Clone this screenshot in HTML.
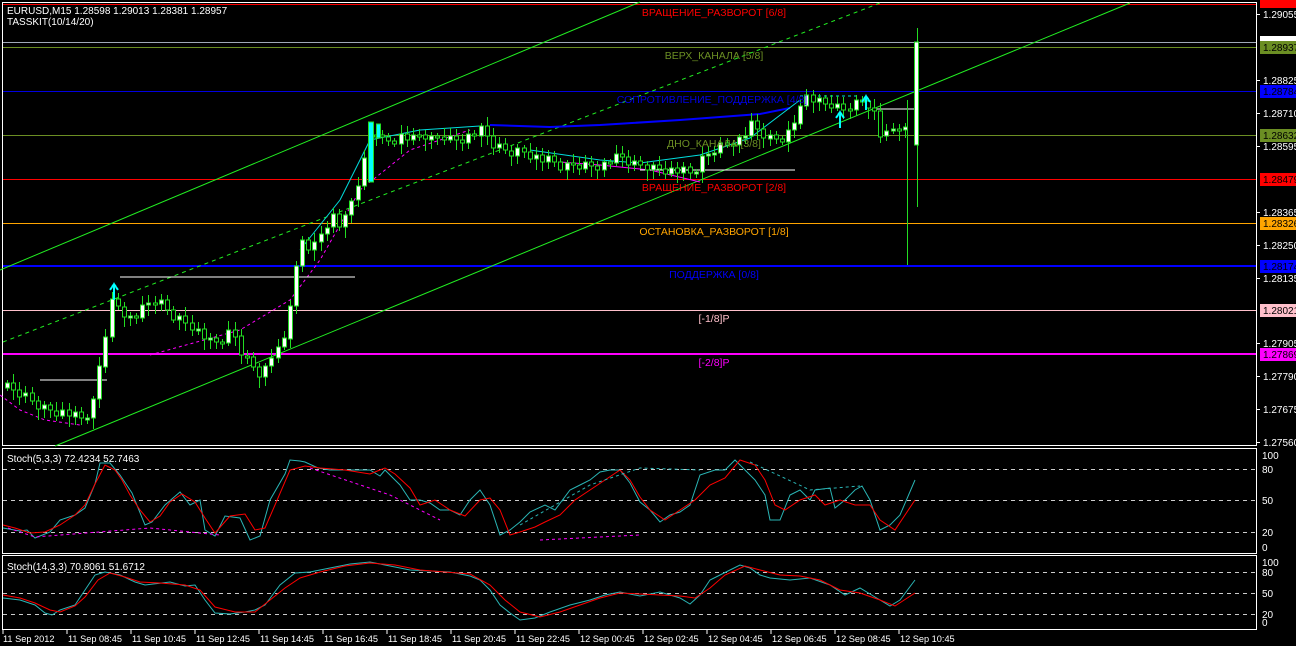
<!DOCTYPE html>
<html><head><meta charset="utf-8"><style>
body{margin:0;background:#000;width:1296px;height:646px;overflow:hidden;font-family:"Liberation Sans","DejaVu Sans",sans-serif}
svg{display:block}
text{font-family:"Liberation Sans","DejaVu Sans",sans-serif;font-size:10px}
.lv text{font-size:10.5px}
.ta text{font-size:9.2px}
</style></head><body>
<svg id="s" width="1296" height="646" viewBox="0 0 1296 646" shape-rendering="crispEdges">
<rect width="1296" height="646" fill="#000"/>
<rect x="2.5" y="2.5" width="1254" height="443" fill="none" stroke="#fff"/>
<rect x="2.5" y="448.5" width="1254" height="105" fill="none" stroke="#fff"/>
<rect x="2.5" y="555.5" width="1254" height="74" fill="none" stroke="#fff"/>
<g stroke-width="1">
<line x1="3" x2="1256" y1="4.5" y2="4.5" stroke="#f00"/>
<line x1="3" x2="1256" y1="42.5" y2="42.5" stroke="#a0a8b8"/>
<line x1="3" x2="1256" y1="47.5" y2="47.5" stroke="#6b8e23"/>
<line x1="3" x2="1256" y1="91.5" y2="91.5" stroke="#0000e0"/>
<line x1="3" x2="1256" y1="135.5" y2="135.5" stroke="#6b8e23"/>
<line x1="3" x2="1256" y1="179.5" y2="179.5" stroke="#f00"/>
<line x1="3" x2="1256" y1="223.5" y2="223.5" stroke="#ffa500"/>
<line x1="3" x2="1256" y1="266" y2="266" stroke="#0000ff" stroke-width="2"/>
<line x1="3" x2="1256" y1="310.5" y2="310.5" stroke="#ffc0cb"/>
<line x1="3" x2="1256" y1="354" y2="354" stroke="#ff00ff" stroke-width="2"/>
</g>
<g shape-rendering="auto">
<line x1="0" y1="270" x2="640" y2="2" stroke="#22ee22"/>
<line x1="55" y1="446" x2="1130" y2="3" stroke="#22ee22"/>
<line x1="3" y1="342" x2="880" y2="3" stroke="#22ee22" stroke-dasharray="4,4"/>
<polyline points="0,395 20,410 45,420 80,425" fill="none" stroke="#ff00ff" stroke-dasharray="3,3"/>
<polyline points="150,355 240,330 290,300 320,260 360,190 410,150 470,130" fill="none" stroke="#ff00ff" stroke-dasharray="3,3"/>
<polyline points="300,250 340,200 370,140 420,130 480,126" fill="none" stroke="#00dddd"/>
<polyline points="490,125 550,127 600,125 680,120 760,114 790,108" fill="none" stroke="#0000ff" stroke-width="2"/>
<polyline points="530,150 600,160 640,163 700,155 750,138 800,100" fill="none" stroke="#00dddd"/>
<polyline points="800,96 860,96" fill="none" stroke="#00dddd" stroke-dasharray="3,3"/>
<polyline points="560,162 600,165 650,170 700,182" fill="none" stroke="#ff00ff"/>
<line x1="40" y1="380" x2="107" y2="380" stroke="#fff"/>
<line x1="120" y1="277" x2="355" y2="277" stroke="#fff"/>
<line x1="640" y1="170" x2="795" y2="170" stroke="#fff"/>
<line x1="875" y1="109" x2="915" y2="109" stroke="#fff"/>
</g>
<g id="candles"></g>
<g text-anchor="middle" class="lv">
<text x="714" y="16" fill="#f00">ВРАЩЕНИЕ_РАЗВОРОТ [6/8]</text>
<text x="714" y="59" fill="#6b8e23">ВЕРХ_КАНАЛА [5/8]</text>
<text x="712" y="103" fill="#0000e0">СОПРОТИВЛЕНИЕ_ПОДДЕРЖКА [4/8]</text>
<text x="714" y="147" fill="#6b8e23">ДНО_КАНАЛА [3/8]</text>
<text x="714" y="191" fill="#f00">ВРАЩЕНИЕ_РАЗВОРОТ [2/8]</text>
<text x="714" y="235" fill="#ffa500">ОСТАНОВКА_РАЗВОРОТ [1/8]</text>
<text x="714" y="278" fill="#0000ff">ПОДДЕРЖКА [0/8]</text>
<text x="714" y="322" fill="#ffc0cb">[-1/8]P</text>
<text x="714" y="366" fill="#ff00ff">[-2/8]P</text>
</g>
<text x="7" y="14" fill="#fff">EURUSD,M15  1.28598 1.29013 1.28381 1.28957</text>
<text x="7" y="25" fill="#fff">TASSKIT(10/14/20)</text>
<g fill="#fff">
<text x="1263" y="18">1.29055</text>
<text x="1263" y="84">1.28825</text>
<text x="1263" y="117">1.28710</text>
<text x="1263" y="150">1.28595</text>
<text x="1263" y="216">1.28365</text>
<text x="1263" y="249">1.28250</text>
<text x="1263" y="282">1.28135</text>
<text x="1263" y="347">1.27905</text>
<text x="1263" y="380">1.27790</text>
<text x="1263" y="413">1.27675</text>
<text x="1263" y="446">1.27560</text>
</g>
<g stroke="#fff"><line x1="1257" x2="1260" y1="14.5" y2="14.5"/><line x1="1257" x2="1260" y1="80.5" y2="80.5"/><line x1="1257" x2="1260" y1="113.5" y2="113.5"/><line x1="1257" x2="1260" y1="146.5" y2="146.5"/><line x1="1257" x2="1260" y1="212.5" y2="212.5"/><line x1="1257" x2="1260" y1="245.5" y2="245.5"/><line x1="1257" x2="1260" y1="278.5" y2="278.5"/><line x1="1257" x2="1260" y1="343.5" y2="343.5"/><line x1="1257" x2="1260" y1="376.5" y2="376.5"/><line x1="1257" x2="1260" y1="409.5" y2="409.5"/><line x1="1257" x2="1260" y1="442.5" y2="442.5"/></g>
<g>
<rect x="1260" y="0" width="36" height="8" fill="#f00"/>
<rect x="1260" y="36" width="36" height="6" fill="#fff"/>
<rect x="1260" y="41" width="36" height="13" fill="#6b8e23"/><text x="1263" y="51" fill="#000">1.28937</text>
<rect x="1260" y="85" width="36" height="13" fill="#0000ff"/><text x="1263" y="95" fill="#000">1.28784</text>
<rect x="1260" y="129" width="36" height="13" fill="#6b8e23"/><text x="1263" y="139" fill="#000">1.28632</text>
<rect x="1260" y="173" width="36" height="13" fill="#f00"/><text x="1263" y="183" fill="#000">1.28479</text>
<rect x="1260" y="217" width="36" height="13" fill="#ffa500"/><text x="1263" y="227" fill="#000">1.28326</text>
<rect x="1260" y="260" width="36" height="13" fill="#0000ff"/><text x="1263" y="270" fill="#000">1.28174</text>
<rect x="1260" y="304" width="36" height="13" fill="#ffc0cb"/><text x="1263" y="314" fill="#000">1.28021</text>
<rect x="1260" y="348" width="36" height="13" fill="#ff00ff"/><text x="1263" y="358" fill="#000">1.27869</text>
</g>
<g stroke="#ccc" stroke-dasharray="4,4"><line x1="3" x2="1256" y1="469.5" y2="469.5"/><line x1="3" x2="1256" y1="500.5" y2="500.5"/><line x1="3" x2="1256" y1="532.5" y2="532.5"/>
<line x1="3" x2="1256" y1="572.5" y2="572.5"/><line x1="3" x2="1256" y1="593.5" y2="593.5"/><line x1="3" x2="1256" y1="614.5" y2="614.5"/></g>
<text x="7" y="462" fill="#fff">Stoch(5,3,3) 72.4234 52.7463</text>
<text x="7" y="570" fill="#fff">Stoch(14,3,3) 70.8061 51.6712</text>
<g fill="#fff"><text x="1262" y="473">80</text><text x="1262" y="459">100</text><text x="1262" y="504">50</text><text x="1262" y="536">20</text><text x="1262" y="551">0</text>
<text x="1262" y="576">80</text><text x="1262" y="566">100</text><text x="1262" y="597">50</text><text x="1262" y="618">20</text><text x="1262" y="626">0</text></g>
<g fill="none" shape-rendering="auto">
<polyline stroke="#2ab5b5" points="3,528 20,531 27,530 35,538 50,532 60,520 75,515 85,508 95,484 100,463 110,463 120,475 132,493 145,525 152,522 165,505 180,492 190,505 200,500 205,530 215,536 225,516 240,518 250,540 260,536 270,500 285,474 290,460 300,461 305,462 318,468 330,470 350,470 370,470 380,476 385,470 390,475 400,485 410,500 420,500 430,503 440,510 450,510 460,515 470,500 480,490 490,505 500,535 510,530 520,522 530,512 545,505 555,510 570,490 580,485 590,480 600,472 610,470 620,470 630,483 640,502 650,510 660,522 670,515 680,512 690,505 700,475 715,470 725,470 735,460 745,470 755,480 765,495 770,520 780,520 790,495 800,490 810,500 815,490 830,488 835,508 845,500 855,490 862,486 870,500 880,530 890,525 900,515 915,480"/>
<polyline stroke="#f00" points="3,525 15,528 30,533 45,532 60,525 75,515 85,505 95,484 105,465 115,470 122,480 130,495 140,510 150,522 160,516 170,502 182,494 195,502 205,518 215,533 230,516 245,514 255,530 265,528 275,505 290,470 305,466 320,468 345,470 370,474 385,468 395,474 410,488 420,505 435,500 450,510 465,516 480,500 490,498 500,510 510,535 520,532 535,527 545,522 560,515 575,500 590,490 605,480 620,470 630,480 640,497 650,510 665,520 680,510 695,500 710,485 725,478 740,460 755,465 765,480 775,505 785,510 800,500 815,495 825,505 840,500 855,505 870,505 880,520 895,530 915,500"/>
<polyline stroke="#ff00ff" stroke-dasharray="3,3" points="8,528 35,537 150,528 220,535"/>
<polyline stroke="#ff00ff" stroke-dasharray="3,3" points="310,468 390,495 440,520"/>
<polyline stroke="#ff00ff" stroke-dasharray="3,3" points="540,540 640,535"/>
<polyline stroke="#2ab5b5" stroke-dasharray="3,3" points="520,525 590,485 640,468 700,470"/>
<polyline stroke="#2ab5b5" stroke-dasharray="3,3" points="750,462 810,490 860,486"/>
<polyline stroke="#2ab5b5" points="3,598 20,600 35,605 45,613 52,615 60,610 75,605 85,590 95,575 105,572 120,575 135,582 145,585 170,582 185,586 195,585 205,600 215,613 230,614 245,612 255,610 265,605 280,585 295,573 310,572 330,568 350,564 370,562 390,566 410,570 430,571 450,572 470,576 480,580 490,590 500,605 510,613 520,620 535,618 550,612 570,605 590,600 605,595 620,592 640,596 660,592 680,598 690,604 700,595 710,580 730,570 740,565 750,568 760,575 770,578 790,580 810,578 830,585 845,595 860,588 875,597 890,606 900,600 915,580"/>
<polyline stroke="#f00" points="3,595 20,598 35,603 50,610 60,612 75,606 85,597 98,580 110,573 125,577 140,582 160,583 185,585 200,590 215,607 235,612 255,612 270,600 285,588 300,578 320,572 345,566 370,563 395,565 420,570 445,572 470,574 490,585 505,600 520,612 540,617 560,612 580,605 600,598 620,593 640,594 660,595 680,596 695,598 710,588 725,575 745,566 760,570 780,575 800,576 820,580 840,590 860,593 880,600 895,606 915,593"/>
</g>
<g fill="#fff" class="ta">
<text x="3" y="642">11 Sep 2012</text><text x="68" y="642">11 Sep 08:45</text><text x="132" y="642">11 Sep 10:45</text><text x="196" y="642">11 Sep 12:45</text><text x="260" y="642">11 Sep 14:45</text><text x="324" y="642">11 Sep 16:45</text><text x="388" y="642">11 Sep 18:45</text><text x="452" y="642">11 Sep 20:45</text><text x="516" y="642">11 Sep 22:45</text><text x="580" y="642">12 Sep 00:45</text><text x="644" y="642">12 Sep 02:45</text><text x="708" y="642">12 Sep 04:45</text><text x="772" y="642">12 Sep 06:45</text><text x="836" y="642">12 Sep 08:45</text><text x="900" y="642">12 Sep 10:45</text>
</g>
<g stroke="#fff"><line x1="3" x2="3" y1="630" y2="634"/><line x1="67" x2="67" y1="630" y2="634"/><line x1="131" x2="131" y1="630" y2="634"/><line x1="195" x2="195" y1="630" y2="634"/><line x1="259" x2="259" y1="630" y2="634"/><line x1="323" x2="323" y1="630" y2="634"/><line x1="387" x2="387" y1="630" y2="634"/><line x1="451" x2="451" y1="630" y2="634"/><line x1="515" x2="515" y1="630" y2="634"/><line x1="579" x2="579" y1="630" y2="634"/><line x1="643" x2="643" y1="630" y2="634"/><line x1="707" x2="707" y1="630" y2="634"/><line x1="771" x2="771" y1="630" y2="634"/><line x1="835" x2="835" y1="630" y2="634"/><line x1="899" x2="899" y1="630" y2="634"/></g>
</svg>
<script>
(function(){
var pts=[[5,388],[20,395],[40,408],[60,412],[80,420],[90,410],[100,350],[110,300],[120,310],[130,320],[140,310],[150,300],[160,305],[170,315],[180,320],[190,325],[200,335],[210,345],[220,340],[230,330],[240,355],[250,365],[260,375],[270,355],[280,350],[290,290],[300,240],[310,250],[320,230],[330,215],[340,230],[350,200],[360,170],[370,125],[380,140],[390,140],[400,135],[410,140],[420,135],[430,140],[440,135],[450,140],[460,138],[470,135],[480,130],[490,145],[500,150],[510,152],[520,150],[530,155],[540,160],[550,162],[560,168],[570,165],[580,165],[590,165],[600,165],[610,160],[620,158],[630,165],[640,165],[650,168],[660,168],[670,170],[680,172],[690,175],[700,160],[710,150],[720,145],[730,140],[740,138],[750,125],[760,135],[770,140],[780,138],[790,130],[800,95],[810,100],[820,105],[830,105],[840,110],[850,105],[860,100],[870,105],[880,140],[890,130],[900,125],[910,145],[916,40]];
function yat(x){for(var i=1;i<pts.length;i++){if(x<=pts[i][0]){var a=pts[i-1],b=pts[i];return a[1]+(b[1]-a[1])*(x-a[0])/(b[0]-a[0]);}}return 40;}
var g=document.getElementById('candles'),h='',prev=yat(5);
for(var x=5,i=0;x<=905;x+=6.15,i++){var c=yat(x);var n=((i*37)%11)-5;c+=n;var o=prev;var t0=Math.min(o,c),b0=Math.max(o,c);if(b0-t0<2){b0=t0+2;}
var hw=3+((i*13)%7),lw=3+((i*7)%9);var xx=Math.round(x);
h+='<line x1="'+(xx+2.5)+'" x2="'+(xx+2.5)+'" y1="'+Math.round(t0-hw)+'" y2="'+Math.round(b0+lw)+'" stroke="#22dd22"/>';
var cy=(c<o?'#fff':'#000');
h+='<rect x="'+(xx+0.5)+'" y="'+Math.round(t0)+'" width="4" height="'+Math.round(b0-t0)+'" fill="'+cy+'" stroke="#22dd22"/>';prev=c;}
h+='<line x1="907.5" x2="907.5" y1="100" y2="265" stroke="#22dd22"/><line x1="917.5" x2="917.5" y1="28" y2="207" stroke="#22dd22"/><rect x="914.5" y="42" width="4" height="103" fill="#fff" stroke="#22dd22"/>';
h+='<rect x="368.5" y="122" width="5" height="60" fill="#00ffff" stroke="#22dd22"/><rect x="376.5" y="124" width="4" height="14" fill="#00ffff" stroke="#22dd22"/>';
h+='<path d="M114 300 L114 285 M110 290 L114 284 L118 290" stroke="#00ffff" stroke-width="2" fill="none"/><path d="M840 128 L840 113 M836 118 L840 112 L844 118" stroke="#00ffff" stroke-width="2" fill="none"/><path d="M866 110 L866 97 M862 102 L866 96 L870 102" stroke="#00ffff" stroke-width="2" fill="none"/>';
g.innerHTML=h;
})();
</script>
</body></html>
